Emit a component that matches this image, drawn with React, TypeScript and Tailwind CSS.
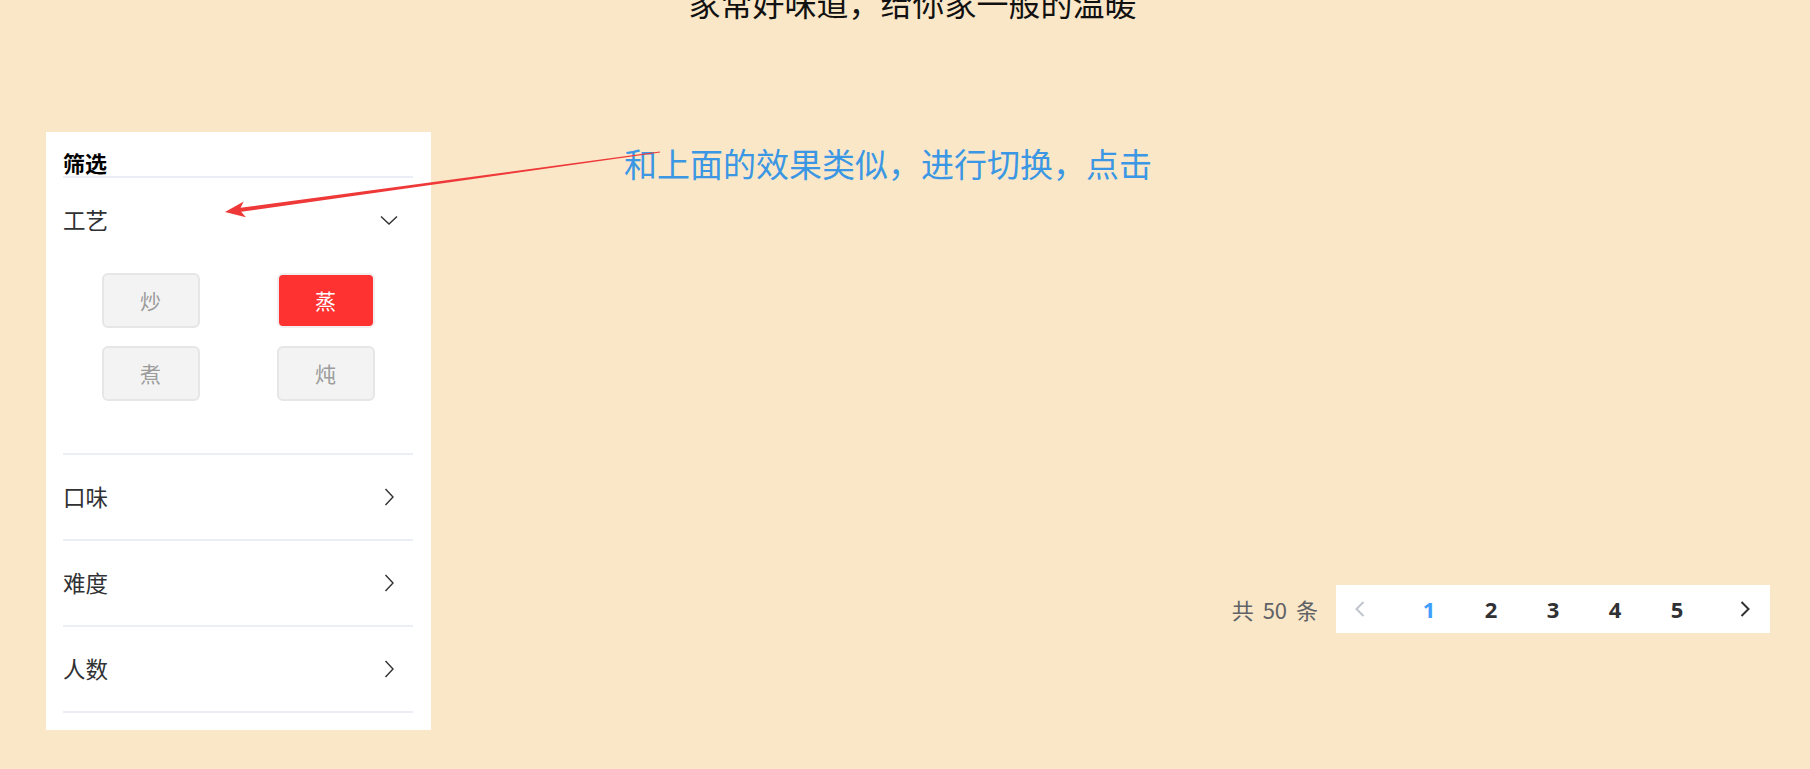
import React, { useState } from "react";

const crafts = ["炒", "蒸", "煮", "炖"];
const groups = ["口味", "难度", "人数"];

const ChevronDown = () => (
  <svg viewBox="0 0 20 20" className="w-5 h-5" fill="none" stroke="#303133" strokeWidth="1.4">
    <path d="M2 6.5 L10 14 L18 6.5" />
  </svg>
);

const ChevronRight = () => (
  <svg viewBox="0 0 20 20" className="w-5 h-5" fill="none" stroke="#303133" strokeWidth="1.4">
    <path d="M6.5 2 L14 10 L6.5 18" />
  </svg>
);

const PagerArrow = ({ dir, color }: { dir: "left" | "right"; color: string }) => (
  <svg viewBox="0 0 20 20" className="w-5 h-5" fill="none" stroke={color} strokeWidth="2">
    <path d={dir === "left" ? "M12.5 3 L5.5 10 L12.5 17" : "M7.5 3 L14.5 10 L7.5 17"} />
  </svg>
);

export default function App() {
  const [active, setActive] = useState("蒸");
  const [page, setPage] = useState(1);

  return (
    <div className="relative w-full h-[769px] overflow-hidden bg-[#fae7c8] font-['Noto_Sans_CJK_SC',sans-serif]">
      {/* 顶部标语 */}
      <div className="mt-[-14px] pl-[15px] text-center text-[32px] leading-[32px] text-[#111]">
        家常好味道，给你家一般的温暖
      </div>

      <div className="flex mt-[114px]">
        {/* 筛选面板 */}
        <div className="ml-[46px] w-[385px] bg-white pl-[17px] pr-[18px] pt-[19px] pb-[17px]">
          <div className="text-[22px] leading-[22px] font-bold text-black pb-[3px] border-b-2 border-[#ebeef5]">
            筛选
          </div>

          <div className="border-b-2 border-[#ebeef5]">
            <div className="h-[84px] flex items-center justify-between text-[22.5px] text-[#303133]">
              <span>工艺</span>
              <span className="mr-[14px]">
                <ChevronDown />
              </span>
            </div>
            <div className="pt-[11px] pb-[52px] grid grid-cols-2 gap-y-[18px]">
              {crafts.map((c) => (
                <div key={c} className="flex justify-center">
                  <button
                    onClick={() => setActive(c)}
                    className={`w-[98px] h-[55px] rounded-[6px] border-2 text-[21px] ${
                      active === c
                        ? "bg-[#ff3232] border-[#f0eeee] text-white"
                        : "bg-[#f3f3f3] border-[#e6e6e6] text-[#9c9c9c]"
                    }`}
                  >
                    {c}
                  </button>
                </div>
              ))}
            </div>
          </div>

          {groups.map((g) => (
            <div
              key={g}
              className="h-[86px] flex items-center justify-between border-b-2 border-[#ebeef5] text-[22.5px] text-[#303133]"
            >
              <span>{g}</span>
              <span className="mr-[14px]">
                <ChevronRight />
              </span>
            </div>
          ))}
        </div>

        {/* 右侧 */}
        <div className="flex-1 flex flex-col mr-[40px]">
          <div className="ml-[193px] mt-[14px] text-[33px] leading-[34px] text-[#3b97e3]">
            和上面的效果类似，进行切换，点击
          </div>

          <div className="self-end mt-[405px] flex items-center">
            <span className="mr-[18px] text-[22px] text-[#606266] [word-spacing:4px]">共 50 条</span>
            <div className="flex bg-white h-[48px] font-['Open_Sans','Noto_Sans_CJK_SC',sans-serif]">
              <button className="w-[62px] h-[48px] flex items-center justify-center pr-[12px]">
                <PagerArrow dir="left" color="#c0c4cc" />
              </button>
              {[1, 2, 3, 4, 5].map((n) => (
                <button
                  key={n}
                  onClick={() => setPage(n)}
                  className={`w-[62px] h-[48px] flex items-center justify-center text-[22px] font-bold ${
                    page === n ? "text-[#409eff]" : "text-[#303133]"
                  }`}
                >
                  {n}
                </button>
              ))}
              <button className="w-[62px] h-[48px] flex items-center justify-center pl-[10px]">
                <PagerArrow dir="right" color="#303133" />
              </button>
            </div>
          </div>
        </div>
      </div>

      {/* 标注箭头 */}
      <svg className="absolute inset-0 pointer-events-none" width="1810" height="769">
        <polygon
          fill="#ef3838"
          points="225,212 245.9,217.2 241.2,211.8 660.1,152.5 659.9,151.5 240.6,207.8 243.7,201.4"
        />
      </svg>
    </div>
  );
}
